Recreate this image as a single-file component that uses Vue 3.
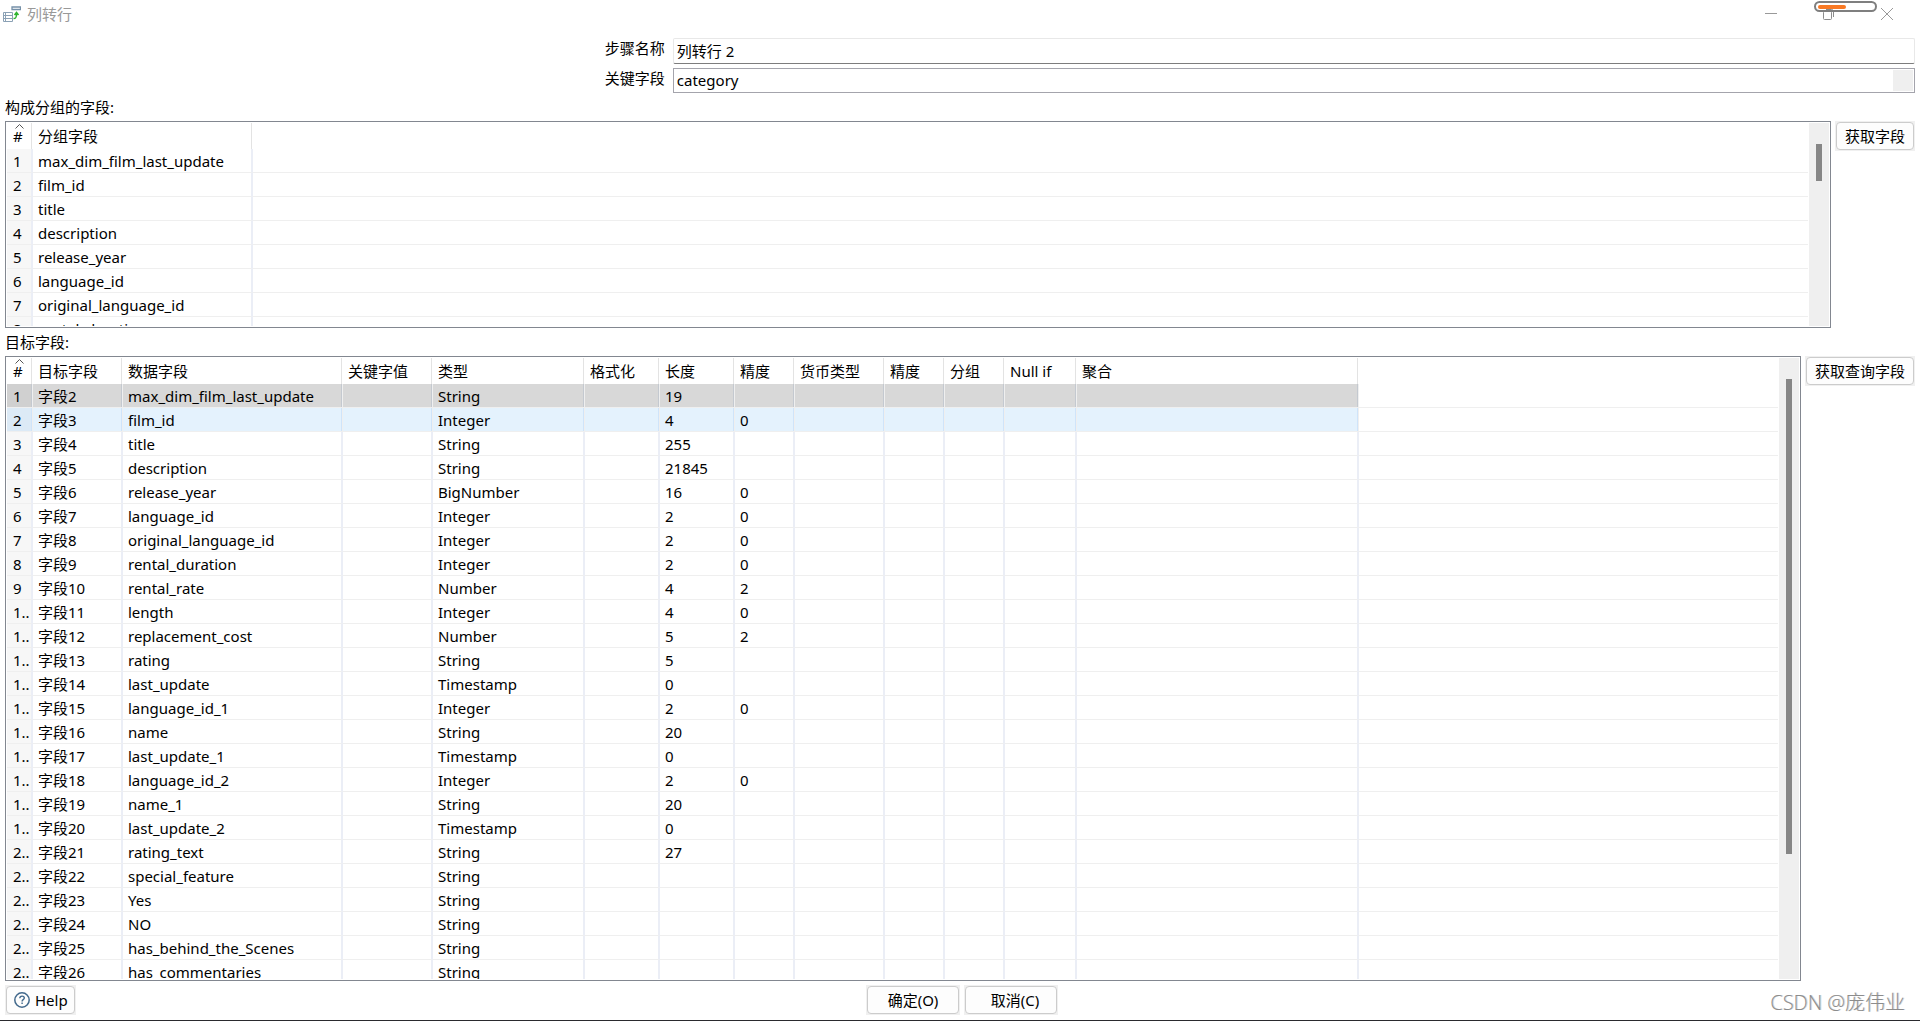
<script setup>
const step = { name: '列转行 2', key: 'category' }

const groupFields = [
  'max_dim_film_last_update', 'film_id', 'title', 'description',
  'release_year', 'language_id', 'original_language_id', 'rental_duration',
]

const targetHeads = [
  '目标字段', '数据字段', '关键字值', '类型', '格式化', '长度',
  '精度', '货币类型', '精度', '分组', 'Null if', '聚合',
]
const targetWidths = [90, 220, 90, 152, 75, 75, 60, 90, 60, 60, 72, 282]

const targetRows = [
  ['max_dim_film_last_update', 'String', '19', ''],
  ['film_id', 'Integer', '4', '0'],
  ['title', 'String', '255', ''],
  ['description', 'String', '21845', ''],
  ['release_year', 'BigNumber', '16', '0'],
  ['language_id', 'Integer', '2', '0'],
  ['original_language_id', 'Integer', '2', '0'],
  ['rental_duration', 'Integer', '2', '0'],
  ['rental_rate', 'Number', '4', '2'],
  ['length', 'Integer', '4', '0'],
  ['replacement_cost', 'Number', '5', '2'],
  ['rating', 'String', '5', ''],
  ['last_update', 'Timestamp', '0', ''],
  ['language_id_1', 'Integer', '2', '0'],
  ['name', 'String', '20', ''],
  ['last_update_1', 'Timestamp', '0', ''],
  ['language_id_2', 'Integer', '2', '0'],
  ['name_1', 'String', '20', ''],
  ['last_update_2', 'Timestamp', '0', ''],
  ['rating_text', 'String', '27', ''],
  ['special_feature', 'String', '', ''],
  ['Yes', 'String', '', ''],
  ['NO', 'String', '', ''],
  ['has_behind_the_Scenes', 'String', '', ''],
  ['has_commentaries', 'String', '', ''],
].map(([field, type, length, precision], i) => [
  `字段${i + 2}`, field, '', type, '', length, precision, '', '', '', '', '',
])

const rowLabel = (n) => (n < 10 ? `${n}` : `${String(n)[0]}..`)
</script>

<template>
  <main class="dialog">
    <header class="titlebar">
      <svg class="app-icon" width="18" height="16" viewBox="0 0 18 16" fill="none">
        <path d="M9 1h8.500v2.500H9z" stroke="#7590a8" stroke-width="1.300" />
        <path d="M.5 6.500h9v9h-9zM.5 9.500h9M.5 12.500h9M2.500 6.500v9" stroke="#8ba1b5" />
        <path d="M10.500 12.500c2.500 0 3-1 3-4.500M11.500 9l2-2.500 2 2.500" stroke="#2cb32c" stroke-width="1.500" />
      </svg>
      <h1 class="title">列转行</h1>
      <div class="window-buttons">
        <button class="win-btn" aria-label="最小化">
          <svg width="14" height="14" viewBox="0 0 14 14"><path d="M1 6.500h12" stroke="#999" /></svg>
        </button>
        <button class="win-btn restore" aria-label="还原">
          <svg width="14" height="14" viewBox="0 0 14 14" fill="none" stroke="#8c8c8c">
            <rect x="1.500" y="4.500" width="8" height="8" rx="1" />
            <path d="M4 2.500h5.500q2 0 2 2V10" />
          </svg>
          <span class="progress"><span class="progress-fill"></span></span>
        </button>
        <button class="win-btn" aria-label="关闭">
          <svg width="14" height="14" viewBox="0 0 14 14"><path d="M1 1l12 12M13 1L1 13" stroke="#999" /></svg>
        </button>
      </div>
    </header>

    <form class="form" @submit.prevent>
      <label for="step-name">步骤名称</label>
      <input id="step-name" class="text-field" type="text" :value="step.name" />
      <label for="key-field">关键字段</label>
      <select id="key-field" class="combo"><option>{{ step.key }}</option></select>
    </form>

    <h2 class="caption">构成分组的字段:</h2>
    <section class="section group-section">
      <div class="panel">
        <div class="viewport">
          <table class="grid">
            <colgroup><col class="col-num" /><col class="col-group" /><col /></colgroup>
            <thead>
              <tr>
                <th class="num">
                  #<svg class="caret" width="9" height="5" viewBox="0 0 9 5" fill="none"><path d="M.5 4.500l4-4 4 4" stroke="#555" /></svg>
                </th>
                <th>分组字段</th>
                <th class="filler"></th>
              </tr>
            </thead>
            <tbody>
              <tr v-for="(f, i) in groupFields" :key="f">
                <td class="num">{{ rowLabel(i + 1) }}</td>
                <td>{{ f }}</td>
                <td class="filler"></td>
              </tr>
            </tbody>
          </table>
        </div>
        <div class="scrollbar"><div class="thumb thumb-short"></div></div>
      </div>
      <span class="btn-frame"><button class="btn side">获取字段</button></span>
    </section>

    <h2 class="caption">目标字段:</h2>
    <section class="section target-section">
      <div class="panel">
        <div class="viewport">
          <table class="grid">
            <colgroup>
              <col class="col-num" />
              <col v-for="(w, i) in targetWidths" :key="i" :style="{ width: w + 'px' }" />
              <col />
            </colgroup>
            <thead>
              <tr>
                <th class="num">
                  #<svg class="caret" width="9" height="5" viewBox="0 0 9 5" fill="none"><path d="M.5 4.500l4-4 4 4" stroke="#555" /></svg>
                </th>
                <th v-for="(h, i) in targetHeads" :key="i">{{ h }}</th>
                <th class="filler"></th>
              </tr>
            </thead>
            <tbody>
              <tr v-for="(row, i) in targetRows" :key="i" :class="{ selected: i === 0, hovered: i === 1 }">
                <td class="num">{{ rowLabel(i + 1) }}</td>
                <td v-for="(cell, c) in row" :key="c">{{ cell }}</td>
                <td class="filler"></td>
              </tr>
            </tbody>
          </table>
        </div>
        <div class="scrollbar"><div class="thumb thumb-long"></div></div>
      </div>
      <span class="btn-frame"><button class="btn side">获取查询字段</button></span>
    </section>

    <footer class="footer">
      <span class="btn-frame">
        <button class="btn help">
          <svg width="16" height="16" viewBox="0 0 16 16" fill="none" stroke="#42698c">
            <circle cx="8" cy="8" r="7.200" stroke-width="1.500" />
            <path d="M5.800 6.300c0-3 4.500-2.800 4.500-.2 0 1.600-2.200 1.500-2.200 3.300M8.100 10.500v1.600" stroke-width="1.400" />
          </svg>
          Help
        </button>
      </span>
      <div class="actions">
        <span class="btn-frame"><button class="btn action">确定(O)</button></span>
        <span class="btn-frame"><button class="btn action cancel">取消(C)</button></span>
      </div>
      <span class="watermark">CSDN @庞伟业</span>
    </footer>
  </main>
</template>

<style>
body {
  background: #fff;
}
</style>

<style scoped>
.dialog {
  box-sizing: border-box;
  height: 100vh;
  display: flex;
  flex-direction: column;
  padding: 0 5px;
  border-bottom: 1px solid #2a2a2e;
  background: #fff;
  color: #000;
  font: 15px/20px "Noto Sans", "Noto Sans CJK SC", sans-serif;
}
.dialog button,
.dialog input,
.dialog select {
  font: inherit;
  color: inherit;
  margin: 0;
}
.titlebar {
  flex: none;
  height: 38px;
  display: flex;
  align-items: flex-start;
  margin-left: -2px;
}
.app-icon {
  margin-top: 6px;
}
.title {
  flex: 1;
  margin: 4px 0 0 6px;
  font-size: 15px;
  font-weight: 400;
  color: #999;
}
.window-buttons {
  display: flex;
  gap: 44px;
  padding: 7px 21px 0 0;
}
.win-btn {
  position: relative;
  width: 14px;
  height: 14px;
  padding: 0;
  border: 0;
  background: none;
}
.win-btn svg {
  display: block;
}
.progress {
  position: absolute;
  left: -8px;
  top: -6px;
  box-sizing: border-box;
  width: 63px;
  height: 11px;
  padding: 2px;
  border: 2px solid #7f7f7f;
  border-radius: 6px;
}
.progress-fill {
  display: block;
  width: 28px;
  height: 4px;
  border-radius: 2px;
  background: #f97924;
}
.form {
  flex: none;
  display: grid;
  grid-template-columns: 35% 1fr;
  row-gap: 4px;
  margin-left: -1px;
}
.form label {
  padding-right: 8px;
  text-align: right;
}
.text-field {
  height: 26px;
  box-sizing: border-box;
  padding: 0 3px 2px;
  border: 1px solid #e8e8e8;
  border-bottom-color: #7d7d7d;
  border-radius: 2px;
  background: #fff;
  outline: none;
}
.combo {
  height: 25px;
  box-sizing: border-box;
  padding: 0 3px 2px;
  border: 1px solid #a4a4ac;
  border-radius: 0;
  appearance: none;
  background: linear-gradient(#efefef, #efefef) right 1px center / 20px 21px no-repeat #fff;
}
.caption {
  flex: none;
  margin: 0;
  font-size: 15px;
  font-weight: 400;
  line-height: 28px;
}
.section {
  min-height: 0;
  display: flex;
  align-items: flex-start;
  gap: 4px;
}
.group-section {
  flex: 207 1 0;
}
.target-section {
  flex: 625 1 0;
}
.panel {
  flex: 1;
  align-self: stretch;
  min-width: 0;
  display: flex;
  gap: 1px;
  padding: 1px;
  border: 1px solid #828790;
}
.viewport {
  flex: 1;
  min-width: 0;
  overflow: hidden;
}
.grid {
  width: 100%;
  table-layout: fixed;
  border-collapse: separate;
  border-spacing: 0;
}
.col-num {
  width: 26px;
}
.col-group {
  width: 220px;
}
.grid th,
.grid td {
  box-sizing: border-box;
  padding: 0 0 0 5px;
  text-align: left;
  font-weight: 400;
  white-space: nowrap;
}
.grid th {
  position: relative;
  height: 26px;
  border-right: 1px solid transparent;
  background: linear-gradient(#e3e3e3, #e3e3e3) right / 1px 100% no-repeat;
}
.grid td {
  height: 24px;
  border-right: 2px solid #ebeef6;
  border-bottom: 1px solid #efefef;
}
.grid .num {
  padding-left: 6px;
}
.grid td.num {
  background: #f7f7f7;
}
.grid th.filler {
  background: none;
}
.grid td.filler {
  border-right: 0;
}
.caret {
  position: absolute;
  left: 8px;
  top: 1px;
}
.selected td:not(.filler) {
  background: linear-gradient(#c4c9d0, #c4c9d0) right / 1px 100% no-repeat #d8d8d8;
  border-right: 1px solid #efefef;
}
.selected td.num:not(.filler) {
  background-color: #d0d0d0;
}
.hovered td:not(.filler) {
  background: linear-gradient(#cfe4fa, #cfe4fa) right / 1px 100% no-repeat #e4f2fd;
  border-right: 1px solid #efefef;
}
.hovered td.num:not(.filler) {
  background-color: #dceaf6;
}
.scrollbar {
  flex: none;
  width: 20px;
  display: flex;
  flex-direction: column;
  align-items: center;
  padding: 21px 0;
  box-sizing: border-box;
  background: #efefef;
}
.thumb {
  width: 6px;
  background: #868686;
}
.thumb-short {
  height: 23%;
}
.thumb-long {
  height: 82%;
}
.btn-frame {
  display: inline-flex;
  padding: 1px;
  background: #f0f0f0;
}
.btn {
  height: 28px;
  padding: 0 8px;
  border: 1px solid #ccc;
  border-radius: 4px;
  background: #fdfdfd;
  line-height: 20px;
  white-space: nowrap;
}
.footer {
  flex: none;
  display: grid;
  grid-template-columns: 1fr auto 1fr;
  align-items: start;
  height: 39px;
  box-sizing: border-box;
  padding-top: 4px;
}
.footer > .btn-frame {
  justify-self: start;
}
.help {
  display: flex;
  align-items: center;
  gap: 5px;
  padding: 0 6px 0 7px;
}
.actions {
  display: flex;
  gap: 4px;
  padding-left: 4px;
}
.action {
  width: 92px;
}
.cancel {
  padding-left: 16px;
}
.watermark {
  justify-self: end;
  padding: 6px 10px 0 0;
  font-family: "Open Sans", "Noto Sans CJK SC", sans-serif;
  font-weight: 300;
  font-size: 20px;
  line-height: 24px;
  color: #8c8c8c;
  text-shadow: 1px 0 0 #d4d4d4;
}
</style>
